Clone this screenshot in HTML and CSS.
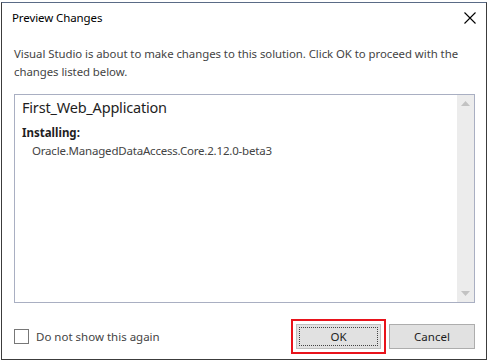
FILE: index.html
```html
<!DOCTYPE html>
<html>
<head>
<meta charset="utf-8">
<link rel="stylesheet" href="styles.css">
</head>
<body>
<div class="dialog">
  <div class="titlebar">
    <span class="title">Preview Changes</span>
    <svg class="close" width="12" height="12" viewBox="0 0 12 12"><path d="M0.5 0.5 L11.5 11.5 M11.5 0.5 L0.5 11.5" stroke="#000" stroke-width="1.1" fill="none"/></svg>
  </div>
  <div class="content">
    <p class="intro">Visual Studio is about to make changes to this solution. Click OK to proceed with the changes listed below.</p>
    <div class="listbox">
      <div class="list">
        <div class="project">First_Web_Application</div>
        <div class="section">Installing:</div>
        <div class="item">Oracle.ManagedDataAccess.Core.2.12.0-beta3</div>
      </div>
      <div class="scrollbar">
        <svg width="9" height="5" viewBox="0 0 9 5"><path d="M0 5 L4.5 0 L9 5 Z" fill="#c2c2c2"/></svg>
        <svg width="9" height="5" viewBox="0 0 9 5"><path d="M0 0 L4.5 5 L9 0 Z" fill="#c2c2c2"/></svg>
      </div>
    </div>
    <div class="footer">
      <label class="check"><span class="box"></span><span>Do not show this again</span></label>
      <div class="buttons">
        <div class="highlight"><button class="btn ok"><span class="focus">OK</span></button></div>
        <button class="btn cancel">Cancel</button>
      </div>
    </div>
  </div>
</div>
</body>
</html>
```
FILE: styles.css
```css
html, body { margin: 0; padding: 0; background: #fff; }
body { width: 488px; height: 363px; overflow: hidden; font-family: "Noto Sans", "Open Sans", sans-serif; }
.dialog {
  box-sizing: border-box;
  margin: 2px 1px 0 1px;
  width: 486px;
  height: 358px;
  border: 1px solid #3c3c3c;
  border-top-color: #5a6b86;
  display: flex;
  flex-direction: column;
}
.titlebar {
  height: 29px;
  display: flex;
  align-items: center;
  justify-content: space-between;
  padding: 0 10px 0 10px;
}
.title { font-size: 11.5px; color: #000; letter-spacing: -0.1px; }
.close { margin-top: 1px; }
.content { padding: 0 11px 0 11px; display: flex; flex-direction: column; flex: 1; }
.intro { margin: 13px 0 0 1px; font-size: 11.4px; line-height: 18px; color: #444; letter-spacing: -0.05px; }
.listbox {
  margin-top: 13px;
  margin-left: 1px;
  height: 209px;
  box-sizing: border-box;
  border: 1px solid #a9afc2;
  display: flex;
}
.list { flex: 1; padding: 2px 7px; }
.project { font-size: 14.5px; color: #1e1e1e; line-height: 20px; letter-spacing: -0.2px; }
.section { margin-top: 8px; font-size: 11.5px; font-weight: bold; color: #1e1e1e; line-height: 15px; }
.item { margin-top: 3px; padding-left: 10px; font-size: 11.5px; color: #444; line-height: 15px; letter-spacing: -0.2px; }
.scrollbar {
  width: 17px;
  background: #ececec;
  display: flex;
  flex-direction: column;
  justify-content: space-between;
  align-items: center;
  padding: 6px 0 6px;
  box-sizing: border-box;
}
.footer { display: flex; justify-content: space-between; align-items: center; margin-top: 16px; }
.check { display: flex; align-items: center; gap: 7px; font-size: 11.5px; color: #444; margin-left: 1px; }
.box { width: 13px; height: 13px; border: 1px solid #777; background: #fff; }
.buttons { display: flex; align-items: center; gap: 3px; }
.highlight { border: 2px solid #e8131b; padding: 3px 3px; }
.btn {
  width: 86px; height: 25px;
  background: #e1e1e1;
  border: 1px solid #adadad;
  font-family: inherit; font-size: 11.5px; color: #1e1e1e;
  padding: 0; margin: 0;
  display: flex; align-items: center; justify-content: center;
}
.ok { width: 85px; border-color: #c0c0c0; padding: 2px; }
.focus { flex: 1; align-self: stretch; border: 1px dotted #444; display: flex; align-items: center; justify-content: center; }
```
